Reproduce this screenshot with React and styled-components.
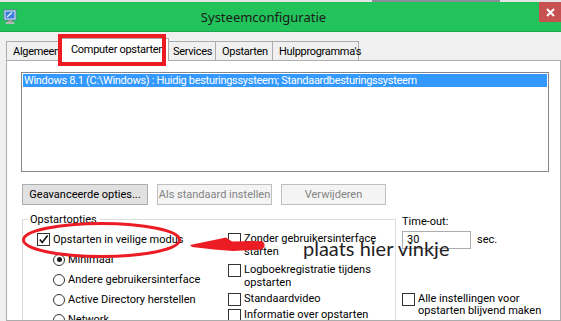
import styled, { createGlobalStyle } from "styled-components";

const GlobalStyle = createGlobalStyle`
  html, body {
    margin: 0;
    padding: 0;
    background: #f0f0f0;
  }
  * {
    box-sizing: border-box;
  }
`;

const Window = styled.div`
  position: relative;
  width: 561px;
  height: 321px;
  overflow: hidden;
  display: flex;
  flex-direction: column;
  background: #f0f0f0;
  font-family: Roboto, "Noto Sans", sans-serif;
  font-size: 11px;
  color: #000;
`;

const DesktopStrip = styled.div`
  height: 2px;
  flex-shrink: 0;
  background: linear-gradient(90deg, #e4e4e4 0 372px, #8a9099 372px 500px, #e4e4e4 500px);
`;

const TitleBar = styled.div`
  height: 30px;
  flex-shrink: 0;
  display: flex;
  align-items: center;
  background: #22c35a;
  border-bottom: 1px solid #1ea84f;
`;

const AppIcon = styled.svg`
  width: 14px;
  height: 16px;
  margin-left: 3px;
  flex-shrink: 0;
`;

const Title = styled.div`
  flex: 1;
  text-align: center;
  padding-right: 29px;
  font-family: "Noto Sans", sans-serif;
  font-size: 13px;
  color: #1b1b1b;
`;

const CloseButton = styled.div`
  align-self: flex-start;
  width: 22px;
  height: 20px;
  background: #c75050;
  display: flex;
  align-items: center;
  justify-content: center;
`;

const Body = styled.div`
  flex: 1;
  min-height: 0;
  padding: 9px 0 0 6px;
  display: flex;
  flex-direction: column;
`;

const TabStrip = styled.div`
  display: flex;
  align-items: flex-end;
  flex-shrink: 0;
  height: 20px;
  margin-bottom: -1px;
  position: relative;
  z-index: 1;
`;

const Tab = styled.div`
  width: ${(p) => p.$w}px;
  height: ${(p) => (p.$active ? 23 : 19)}px;
  margin: ${(p) => (p.$active ? "0 -2px 0 -2px" : "0 0 1px 0")};
  padding: ${(p) => (p.$active ? "4px 0 0 9px" : "3px 0 0 6px")};
  border: 1px solid #acacac;
  border-bottom: none;
  background: ${(p) => (p.$active ? "#fff" : "#f0f0f0")};
  white-space: nowrap;
  line-height: 13px;
  letter-spacing: -0.3px;
  position: relative;
  z-index: ${(p) => (p.$active ? 2 : 1)};
  & + & {
    margin-left: ${(p) => (p.$active ? "-2px" : "-1px")};
  }
`;

const Panel = styled.div`
  width: 555px;
  flex: 1;
  min-height: 0;
  background: #fff;
  border: 1px solid #acacac;
  padding: 11px 0 0 14px;
  overflow: hidden;
`;

const ListBox = styled.div`
  width: 528px;
  height: 100px;
  border: 1px solid #828790;
  padding: 1px;
`;

const ListRow = styled.div`
  height: 13px;
  line-height: 13px;
  padding-left: 1px;
  letter-spacing: -0.3px;
  background: ${(p) => (p.$selected ? "#3399ff" : "transparent")};
  color: ${(p) => (p.$selected ? "#fff" : "#000")};
  white-space: nowrap;
`;

const ButtonRow = styled.div`
  display: flex;
  gap: 9px;
  margin: 12px 0 0 1px;
`;

const Button = styled.div`
  width: ${(p) => p.$w}px;
  height: 21px;
  display: flex;
  align-items: center;
  justify-content: center;
  border: 1px solid ${(p) => (p.$disabled ? "#bfbfbf" : "#adadad")};
  background: ${(p) => (p.$disabled ? "#f4f4f4" : "#e1e1e1")};
  color: ${(p) => (p.$disabled ? "#838383" : "#000")};
  white-space: nowrap;
`;

const BottomRow = styled.div`
  display: flex;
  align-items: flex-start;
  margin: 8px 0 0 1px;
`;

const GroupBox = styled.fieldset`
  width: 374px;
  height: 130px;
  margin: 0;
  padding: 7px 0 0 14px;
  border: 1px solid #dcdcdc;
  min-width: 0;
  display: flex;
`;

const Legend = styled.legend`
  margin-left: -9px;
  padding: 0 2px;
  line-height: 13px;
`;

const Column = styled.div`
  width: ${(p) => (p.$w ? `${p.$w}px` : "auto")};
  display: flex;
  flex-direction: column;
`;

const CheckRow = styled.div`
  display: flex;
  align-items: flex-start;
  gap: 3px;
  margin-top: ${(p) => p.$mt || 0}px;
  line-height: ${(p) => p.$lh || 13}px;
  white-space: nowrap;
`;

const Box = styled.span`
  width: 13px;
  height: 13px;
  flex-shrink: 0;
  border: 1px solid #333;
  background: #fff;
  display: flex;
  align-items: center;
  justify-content: center;
`;

const RadioRow = styled.div`
  display: flex;
  align-items: center;
  gap: 3px;
  margin: 7px 0 0 16px;
  line-height: 13px;
  white-space: nowrap;
`;

const Radio = styled.span`
  width: 12px;
  height: 12px;
  flex-shrink: 0;
  border: 1px solid #333;
  border-radius: 50%;
  background: #fff;
  display: flex;
  align-items: center;
  justify-content: center;
  &::after {
    content: "";
    width: 5px;
    height: 5px;
    border-radius: 50%;
    background: ${(p) => (p.$checked ? "#1a1a1a" : "transparent")};
  }
`;

const TimeoutColumn = styled.div`
  margin-left: 6px;
  padding-top: 2px;
  display: flex;
  flex-direction: column;
  line-height: 13px;
`;

const TimeoutRow = styled.div`
  display: flex;
  align-items: center;
  gap: 6px;
  margin-top: 2.5px;
`;

const TimeoutInput = styled.div`
  width: 69px;
  height: 18px;
  border: 1px solid #abadb3;
  padding-left: 4px;
  display: flex;
  align-items: center;
  background: #fff;
`;

const Overlay = styled.svg`
  position: absolute;
  left: 0;
  top: 0;
  pointer-events: none;
  z-index: 5;
`;

const Note = styled.div`
  position: absolute;
  left: 303px;
  top: 238px;
  font-family: Lato, "Noto Sans", sans-serif;
  font-size: 20px;
  line-height: 20px;
  color: #1e1e1e;
  white-space: nowrap;
  z-index: 6;
`;

const Check = () => (
  <svg width="11" height="11" viewBox="0 0 11 11">
    <path d="M1.8 5.6 L4.2 8.4 L9.6 1.6" fill="none" stroke="#111" strokeWidth="1.6" />
  </svg>
);

const CheckItem = ({ checked, mt, lh, children }) => (
  <CheckRow $mt={mt} $lh={lh}>
    <Box>{checked && <Check />}</Box>
    <span>{children}</span>
  </CheckRow>
);

const tabs = [
  { label: "Algemeen", w: 56 },
  { label: "Computer opstarten", w: 108, active: true },
  { label: "Services", w: 50 },
  { label: "Opstarten", w: 58 },
  { label: "Hulpprogramma's", w: 87 },
];

const App = () => {
  return (
    <Window>
      <GlobalStyle />
      <DesktopStrip />
      <TitleBar>
        <AppIcon viewBox="0 0 14 16">
          <rect x="1" y="1" width="12" height="10" fill="#dfe8f4" stroke="#5d7fa8" strokeWidth="1" />
          <rect x="2.5" y="2.5" width="9" height="7" fill="#3b7fd6" />
          <path d="M4 8 L9 3.5" stroke="#e8f2ff" strokeWidth="1.2" />
          <rect x="5" y="11" width="4" height="2" fill="#9a9a9a" />
          <rect x="2.5" y="13" width="9" height="2" rx="1" fill="#b8b8b8" />
        </AppIcon>
        <Title>Systeemconfiguratie</Title>
        <CloseButton>
          <svg width="9" height="9" viewBox="0 0 9 9">
            <path d="M1 1 L8 8 M8 1 L1 8" stroke="#fff" strokeWidth="2" />
          </svg>
        </CloseButton>
      </TitleBar>

      <Body>
        <TabStrip>
          {tabs.map((t) => (
            <Tab key={t.label} $w={t.w} $active={t.active}>
              {t.label}
            </Tab>
          ))}
        </TabStrip>
        <Panel>
          <ListBox>
            <ListRow $selected>
              Windows 8.1 (C:\Windows) : Huidig besturingssysteem; Standaardbesturingssysteem
            </ListRow>
          </ListBox>
          <ButtonRow>
            <Button $w={126}>Geavanceerde opties...</Button>
            <Button $w={115} $disabled>
              Als standaard instellen
            </Button>
            <Button $w={105} $disabled>
              Verwijderen
            </Button>
          </ButtonRow>
          <BottomRow>
            <GroupBox>
              <Legend>Opstartopties</Legend>
              <Column $w={191}>
                <CheckItem checked>Opstarten in veilige modus</CheckItem>
                <RadioRow>
                  <Radio $checked />
                  Minimaal
                </RadioRow>
                <RadioRow>
                  <Radio />
                  Andere gebruikersinterface
                </RadioRow>
                <RadioRow>
                  <Radio />
                  Active Directory herstellen
                </RadioRow>
                <RadioRow>
                  <Radio />
                  Network
                </RadioRow>
              </Column>
              <Column>
                <CheckItem lh={12.5}>
                  Zonder gebruikersinterface
                  <br />
                  starten
                </CheckItem>
                <CheckItem mt={6} lh={12.5}>
                  Logboekregistratie tijdens
                  <br />
                  opstarten
                </CheckItem>
                <CheckItem mt={4} lh={12.5}>
                  Standaardvideo
                </CheckItem>
                <CheckItem mt={2.5} lh={12.5}>
                  Informatie over opstarten
                </CheckItem>
              </Column>
            </GroupBox>
            <TimeoutColumn>
              <span>Time-out:</span>
              <TimeoutRow>
                <TimeoutInput>30</TimeoutInput>
                <span>sec.</span>
              </TimeoutRow>
              <CheckItem mt={44.5} lh={12}>
                Alle instellingen voor
                <br />
                opstarten blijvend maken
              </CheckItem>
            </TimeoutColumn>
          </BottomRow>
        </Panel>
      </Body>

      <Overlay width="561" height="321" viewBox="0 0 561 321">
        <rect x="60" y="36" width="104" height="28" fill="none" stroke="#ec1c24" strokeWidth="4" />
        <ellipse cx="101.5" cy="240" rx="78" ry="16.5" fill="none" stroke="#ec1c24" strokeWidth="3" />
        <path
          d="M190 245 L214 240 L226 237.5 L232 241.5 L262 241 Q267.5 245 262 249.5 L233 251 L214 249.5 L192 247 Z"
          fill="#ec1c24"
        />
      </Overlay>
      <Note>plaats hier vinkje</Note>
    </Window>
  );
};

export default App;
